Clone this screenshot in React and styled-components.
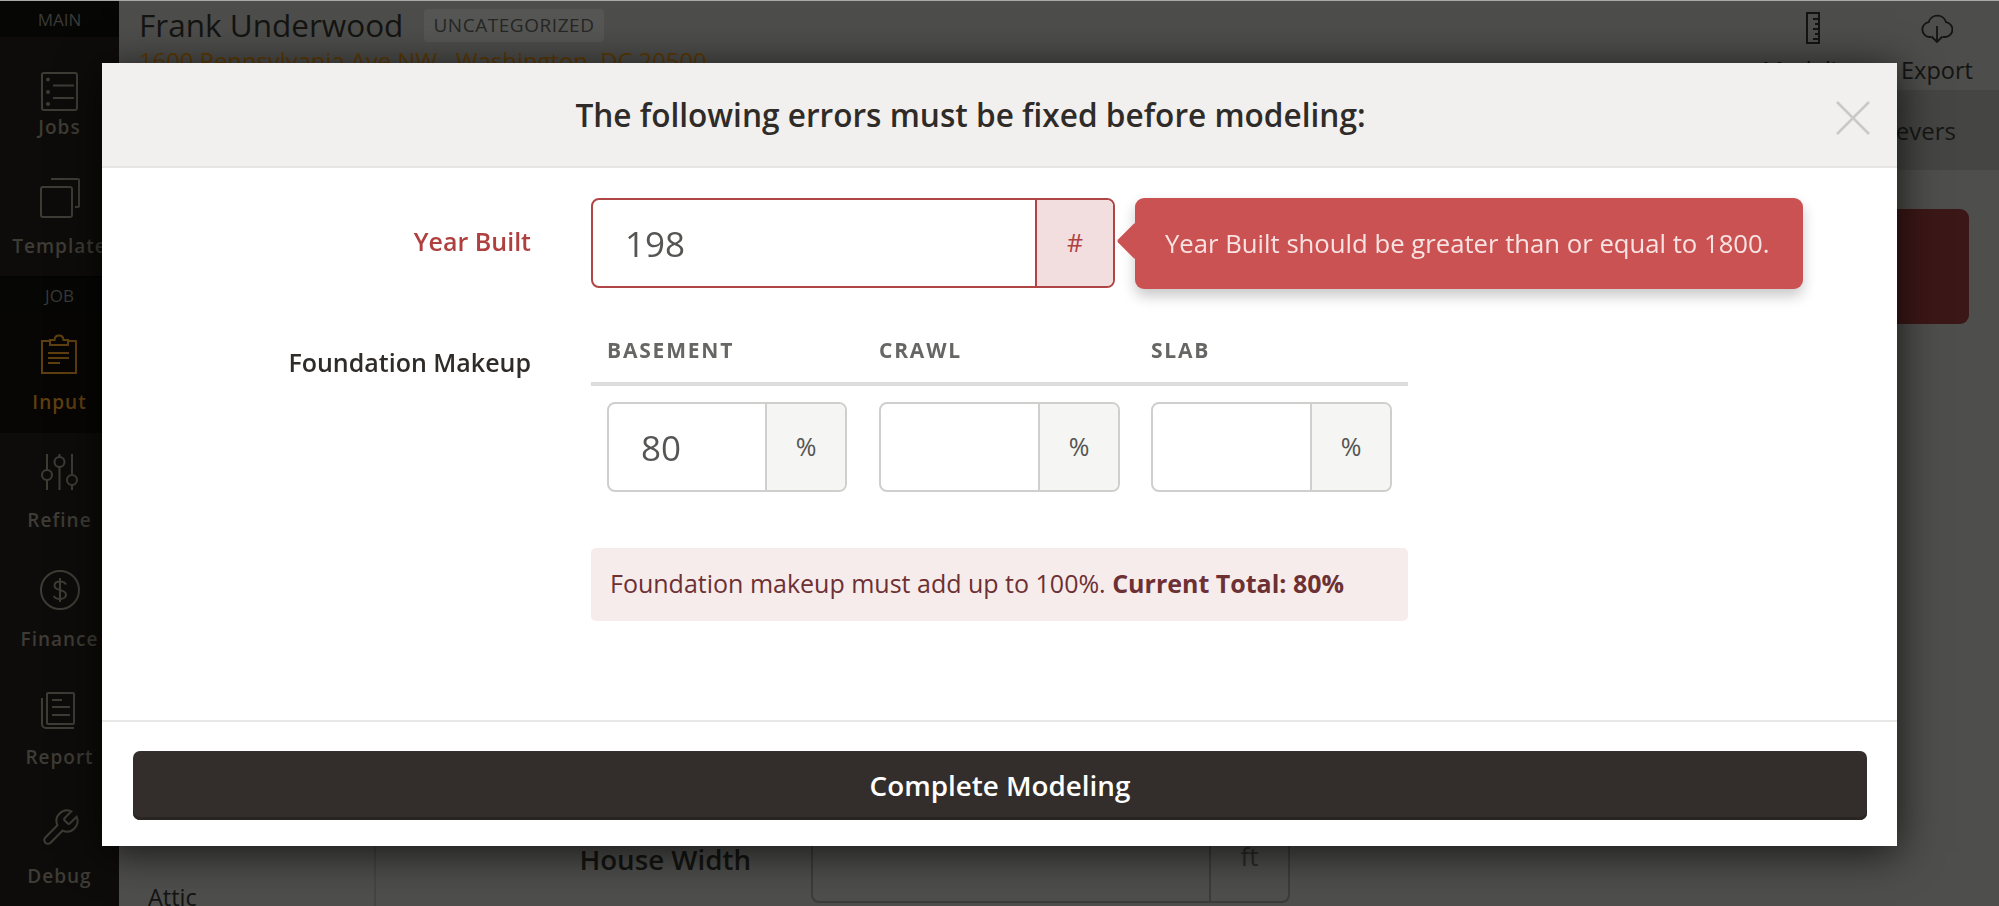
import React from "react";
import styled, { createGlobalStyle } from "styled-components";

const Global = createGlobalStyle`
  html, body { margin: 0; padding: 0; height: 100%; overflow: hidden; }
  body { font-family: "Open Sans", "Liberation Sans", sans-serif; background: #4e4e4c; }
  * { box-sizing: border-box; }
`;

const Page = styled.div`
  display: flex;
  height: 906px;
  border-top: 1px solid #a8a8a6;
  overflow: hidden;
`;

/* ---------- dimmed sidebar ---------- */
const Sidebar = styled.nav`
  width: 119px;
  flex: none;
  display: flex;
  flex-direction: column;
  background: #0d0c0a;
`;
const GroupBar = styled.div`
  height: ${p => p.$h}px;
  flex: none;
  display: flex;
  align-items: center;
  justify-content: center;
  background: #060605;
  color: #3a3a37;
  font-size: 17px;
  ${p => p.$line && "border-top: 2px solid #040404;"}
`;
const NavItem = styled.div`
  height: ${p => p.$h}px;
  flex: none;
  display: flex;
  flex-direction: column;
  align-items: center;
  padding-top: ${p => p.$top}px;
  background: ${p => (p.$active ? "#070604" : "transparent")};
  color: ${p => (p.$active ? "#5f3f10" : "#3f3c36")};
  svg { display: block; flex: none; }
`;
const NavLabel = styled.span`
  margin-top: ${p => p.$gap}px;
  font-size: 19px;
  line-height: 24px;
  font-weight: 600;
  letter-spacing: 1px;
  white-space: nowrap;
`;

const Ico = ({ w = 40, h = 40, sw = 2, children }) => (
  <svg width={w} height={h} viewBox={`0 0 ${w} ${h}`} fill="none" stroke="currentColor" strokeWidth={sw}>
    {children}
  </svg>
);
const JobsIcon = () => (
  <Ico h={40}>
    <rect x="2" y="2" width="35" height="37" rx="2" />
    <path d="M13 14.5H34M13 27H34" />
    <circle cx="8" cy="8.5" r="2" fill="currentColor" stroke="none" />
    <circle cx="8" cy="21" r="2" fill="currentColor" stroke="none" />
    <circle cx="8" cy="33" r="2" fill="currentColor" stroke="none" />
  </Ico>
);
const TemplateIcon = () => (
  <Ico>
    <rect x="1" y="9" width="31" height="30" rx="2" />
    <path d="M11 1H38a1 1 0 0 1 1 1V28a1 1 0 0 1-1 1H35" />
  </Ico>
);
const InputIcon = () => (
  <Ico>
    <path d="M9 7H2V39H36V7H28" />
    <path d="M10 11V6H14.5C15 0 23 0 23.5 6H28V11Z" />
    <path d="M8 19H29M8 24H29M8 29H20" />
  </Ico>
);
const RefineIcon = () => (
  <Ico h={36}>
    <path d="M7 0V16M7 26V36M19.500 0V3M19.500 13V36M32 0V20M32 31V36" />
    <circle cx="7" cy="21" r="5" />
    <circle cx="19.500" cy="8" r="5" />
    <circle cx="32" cy="26" r="5" />
  </Ico>
);
const FinanceIcon = () => (
  <Ico>
    <circle cx="20" cy="20" r="19" />
    <path d="M26 14.500c-1-2-3-3-6-3c-3.500 0-5.500 1.800-5.500 4.300c0 5.700 11.500 3 11.500 8.700c0 2.700-2.500 4.500-6 4.500c-3 0-5.200-1-6.200-3.200M20 8V32" />
  </Ico>
);
const ReportIcon = () => (
  <Ico h={38}>
    <rect x="7" y="2" width="27" height="31" rx="1" />
    <path d="M2 7V33a4 4 0 0 0 4 4H34" />
    <path d="M12 9H22M12 16H30M12 24H30" />
  </Ico>
);
const DebugIcon = () => (
  <svg width="42" height="42" viewBox="0 0 24 24" fill="none" stroke="currentColor" strokeWidth="1.150">
    <path d="M14.700 6.300a1 1 0 0 0 0 1.400l1.600 1.600a1 1 0 0 0 1.400 0l3.770-3.770a6 6 0 0 1-7.940 7.940l-6.910 6.910a2.120 2.120 0 0 1-3-3l6.910-6.910a6 6 0 0 1 7.940-7.940l-3.760 3.760z" />
  </svg>
);

/* ---------- dimmed page ---------- */
const Main = styled.main`
  flex: 1;
  min-width: 0;
  display: flex;
  flex-direction: column;
`;
const TopBar = styled.header`
  height: 91px;
  flex: none;
  display: flex;
  justify-content: space-between;
  padding-left: 20px;
  border-bottom: 2px solid #454543;
  background: #4d4d4b;
`;
const Titles = styled.div`
  padding-top: 7px;
`;
const NameRow = styled.div`
  display: flex;
  align-items: center;
  gap: 21px;
  height: 34px;
`;
const Name = styled.h1`
  margin: 0;
  font-size: 31.500px;
  line-height: 34px;
  font-weight: 400;
  color: #141412;
`;
const Badge = styled.span`
  height: 33px;
  padding: 0 9px;
  display: flex;
  align-items: center;
  background: #565654;
  border-radius: 4px;
  font-size: 19px;
  letter-spacing: .55px;
  color: #262624;
`;
const Address = styled.div`
  margin-top: 5px;
  font-size: 23.800px;
  line-height: 28px;
  color: #5e3b05;
  white-space: nowrap;
`;
const Tools = styled.div`
  display: flex;
`;
const Tool = styled.div`
  width: 124px;
  display: flex;
  flex-direction: column;
  align-items: center;
  padding-top: 11px;
  color: #141412;
  font-size: 23.500px;
  line-height: 30px;
  svg { display: block; margin-bottom: 11px; }
`;
const SubNav = styled.div`
  height: 78px;
  flex: none;
  display: flex;
  align-items: center;
  justify-content: flex-end;
  padding: 0 43px 2px 0;
  background: #454543;
  color: #171715;
  font-size: 24px;
`;
const Content = styled.div`
  flex: 1;
  min-height: 0;
  display: flex;
`;
const SideCol = styled.aside`
  width: 257px;
  flex: none;
  display: flex;
  flex-direction: column;
  justify-content: flex-end;
  padding: 0 0 0 29px;
  border-right: 2px solid #454543;
`;
const SideLink = styled.div`
  font-size: 23.500px;
  line-height: 18px;
  color: #141412;
`;
const FormCol = styled.section`
  flex: 1;
  min-width: 0;
  display: flex;
  flex-direction: column;
  justify-content: space-between;
  padding: 39px 30px 3px 0;
`;
const AlertCard = styled.div`
  height: 115px;
  margin-left: 30px;
  background: #3c1717;
  border-radius: 9px;
`;
const BackRow = styled.div`
  display: flex;
  align-items: center;
  gap: 60px;
`;
const BackLabel = styled.div`
  width: 375px;
  text-align: right;
  font-size: 27.700px;
  font-weight: 600;
  color: #141412;
  padding-top: 2px;
`;
const BackField = styled.div`
  width: 479px;
  height: 90px;
  display: flex;
  border: 2px solid #3c3c3a;
  border-radius: 8px;
`;
const BackInput = styled.div`
  flex: 1;
  border-right: 2px solid #3c3c3a;
`;
const BackUnit = styled.div`
  width: 77px;
  display: flex;
  align-items: center;
  justify-content: center;
  padding-bottom: 4px;
  font-size: 26px;
  color: #2a2a28;
`;

/* ---------- modal ---------- */
const Modal = styled.div`
  position: fixed;
  left: 102px;
  top: 63px;
  width: 1795px;
  height: 783px;
  display: flex;
  flex-direction: column;
  background: #fff;
  box-shadow: 0 6px 40px rgba(0, 0, 0, .75);
`;
const ModalHead = styled.div`
  position: relative;
  height: 105px;
  flex: none;
  display: flex;
  align-items: center;
  justify-content: center;
  padding-right: 58px;
  background: #f1f0ee;
  border-bottom: 2px solid #e6e5e3;
`;
const ModalTitle = styled.h2`
  margin: 0;
  font-size: 31.600px;
  font-weight: 600;
  color: #2f2b28;
`;
const CloseBtn = styled.button`
  position: absolute;
  right: 27px;
  top: 38px;
  width: 34px;
  height: 34px;
  padding: 0;
  border: 0;
  background: none;
  color: #c9c9c6;
  svg { display: block; }
`;
const ModalBody = styled.div`
  flex: 1;
  min-height: 0;
  padding-top: 30px;
  display: flex;
  flex-direction: column;
`;
const Row = styled.div`
  display: flex;
  gap: 60px;
  align-items: flex-start;
  margin-top: ${p => p.$top || 0}px;
`;
const Label = styled.label`
  width: 429px;
  flex: none;
  text-align: right;
  font-size: 25px;
  line-height: 30px;
  font-weight: 600;
  color: ${p => (p.$error ? "#b04040" : "#2f2b28")};
  margin-top: ${p => p.$offset}px;
`;
const Field = styled.div`
  width: ${p => p.$w}px;
  height: 90px;
  flex: none;
  display: flex;
  border: 2px solid ${p => (p.$error ? "#b04545" : "#cfcfcd")};
  border-radius: 8px;
  overflow: hidden;
  background: #fff;
`;
const NumInput = styled.input`
  flex: 1;
  min-width: 0;
  border: 0;
  outline: 0;
  padding: 1px 0 0 ${p => p.$pad}px;
  font-family: inherit;
  font-size: 35px;
  color: #555553;
  background: transparent;
`;
const Unit = styled.div`
  width: ${p => p.$w}px;
  flex: none;
  display: flex;
  align-items: center;
  justify-content: center;
  padding-bottom: 2px;
  font-size: 25px;
  color: ${p => (p.$error ? "#b04040" : "#555553")};
  background: ${p => (p.$error ? "#f2dddf" : "#f5f5f3")};
  border-left: 2px solid ${p => (p.$error ? "#b04545" : "#cfcfcd")};
`;
const ErrorTip = styled.div`
  position: relative;
  width: 668px;
  height: 91px;
  margin-left: -40px;
  display: flex;
  align-items: center;
  padding-left: 30px;
  background: #cb5252;
  border-radius: 9px;
  color: #f8e2e2;
  font-size: 25.700px;
  box-shadow: 0 7px 14px rgba(0, 0, 0, .22);
  white-space: nowrap;
  &::before {
    content: "";
    position: absolute;
    left: -13px;
    top: 30px;
    width: 26px;
    height: 26px;
    background: #cb5252;
    transform: rotate(45deg);
    border-radius: 2px;
  }
`;
const Makeup = styled.div`
  width: 817px;
  flex: none;
`;
const MakeupHead = styled.div`
  display: grid;
  grid-template-columns: repeat(3, 272px);
  height: 50px;
  padding-top: 1px;
  border-bottom: 4px solid #dddddb;
`;
const ColTitle = styled.div`
  padding-left: 16px;
  font-size: 21px;
  line-height: 26px;
  font-weight: 700;
  letter-spacing: 1.800px;
  color: #666664;
`;
const MakeupInputs = styled.div`
  display: grid;
  grid-template-columns: repeat(3, 272px);
  padding-top: 16px;
`;
const MakeupCell = styled.div`
  padding-left: 16px;
`;
const Notice = styled.div`
  width: 817px;
  height: 73px;
  margin: 56px 0 0 489px;
  display: flex;
  align-items: center;
  padding: 0 0 3px 19px;
  background: #f6ecec;
  border-radius: 5px;
  font-size: 25px;
  color: #6d3033;
  white-space: pre;
  b { font-weight: 700; }
`;
const ModalFoot = styled.div`
  height: 126px;
  flex: none;
  padding: 29px 30px 0 31px;
  border-top: 2px solid #e8e8e7;
`;
const PrimaryBtn = styled.button`
  width: 100%;
  height: 69px;
  padding: 0 0 2px;
  border: 0;
  border-radius: 7px;
  background: #332e2b;
  box-shadow: inset 0 -3px 0 #292522;
  color: #fff;
  font-family: inherit;
  font-size: 27.800px;
  font-weight: 600;
`;

const makeup = [
  { title: "BASEMENT", value: "80", w: 240 },
  { title: "CRAWL", value: "", w: 241 },
  { title: "SLAB", value: "", w: 241 },
];

export default function App() {
  return (
    <>
      <Global />
      <Page>
        <Sidebar>
          <GroupBar $h={36}>MAIN</GroupBar>
          <NavItem $h={120} $top={34}><JobsIcon /><NavLabel $gap={4}>Jobs</NavLabel></NavItem>
          <NavItem $h={119} $top={21}><TemplateIcon /><NavLabel $gap={16}>Template</NavLabel></NavItem>
          <GroupBar $h={37} $line>JOB</GroupBar>
          <NavItem $h={120} $active $top={21}><InputIcon /><NavLabel $gap={16}>Input</NavLabel></NavItem>
          <NavItem $h={118} $top={21}><RefineIcon /><NavLabel $gap={18}>Refine</NavLabel></NavItem>
          <NavItem $h={119} $top={19}><FinanceIcon /><NavLabel $gap={17}>Finance</NavLabel></NavItem>
          <NavItem $h={118} $top={21}><ReportIcon /><NavLabel $gap={16}>Report</NavLabel></NavItem>
          <NavItem $h={119} $top={19}><DebugIcon /><NavLabel $gap={15}>Debug</NavLabel></NavItem>
        </Sidebar>
        <Main>
          <TopBar>
            <Titles>
              <NameRow>
                <Name>Frank Underwood</Name>
                <Badge>UNCATEGORIZED</Badge>
              </NameRow>
              <Address>1600 Pennsylvania Ave NW , Washington, DC 20500</Address>
            </Titles>
            <Tools>
              <Tool>
                <Ico w={14} h={32}>
                  <rect x="1" y="1" width="12" height="30" />
                  <path d="M7 7H13M9 12H13M7 17H13M9 22H13M7 27H13" />
                </Ico>
                Modeling
              </Tool>
              <Tool>
                <Ico w={32} h={32} sw={1.8}>
                  <path d="M10 25H8.500a7.500 7.500 0 0 1-.8-14.900a9 9 0 0 1 17.300 0a7.500 7.500 0 0 1-.5 14.900H22" />
                  <path d="M16 14V30M10.500 24.500L16 30L21.500 24.500" />
                </Ico>
                Export
              </Tool>
            </Tools>
          </TopBar>
          <SubNav>Levers</SubNav>
          <Content>
            <SideCol><SideLink>Attic</SideLink></SideCol>
            <FormCol>
              <AlertCard />
              <BackRow>
                <BackLabel>House Width</BackLabel>
                <BackField>
                  <BackInput />
                  <BackUnit>ft</BackUnit>
                </BackField>
              </BackRow>
            </FormCol>
          </Content>
        </Main>
      </Page>

      <Modal>
        <ModalHead>
          <ModalTitle>The following errors must be fixed before modeling:</ModalTitle>
          <CloseBtn aria-label="Close">
            <svg width="34" height="34" viewBox="0 0 34 34" stroke="currentColor" strokeWidth="2.600">
              <path d="M1 1L33 33M33 1L1 33" />
            </svg>
          </CloseBtn>
        </ModalHead>
        <ModalBody>
          <Row>
            <Label $error $offset={28}>Year Built</Label>
            <Field $error $w={524}>
              <NumInput $pad={32} value="198" readOnly />
              <Unit $error $w={78}>#</Unit>
            </Field>
            <ErrorTip>Year Built should be greater than or equal to 1800.</ErrorTip>
          </Row>
          <Row $top={47}>
            <Label $offset={11}>Foundation Makeup</Label>
            <Makeup>
              <MakeupHead>
                {makeup.map(m => <ColTitle key={m.title}>{m.title}</ColTitle>)}
              </MakeupHead>
              <MakeupInputs>
                {makeup.map(m => (
                  <MakeupCell key={m.title}>
                    <Field $w={m.w}>
                      <NumInput $pad={32} value={m.value} readOnly />
                      <Unit $w={80}>%</Unit>
                    </Field>
                  </MakeupCell>
                ))}
              </MakeupInputs>
            </Makeup>
          </Row>
          <Notice>Foundation makeup must add up to 100%. <b>Current Total: 80%</b></Notice>
        </ModalBody>
        <ModalFoot>
          <PrimaryBtn>Complete Modeling</PrimaryBtn>
        </ModalFoot>
      </Modal>
    </>
  );
}
